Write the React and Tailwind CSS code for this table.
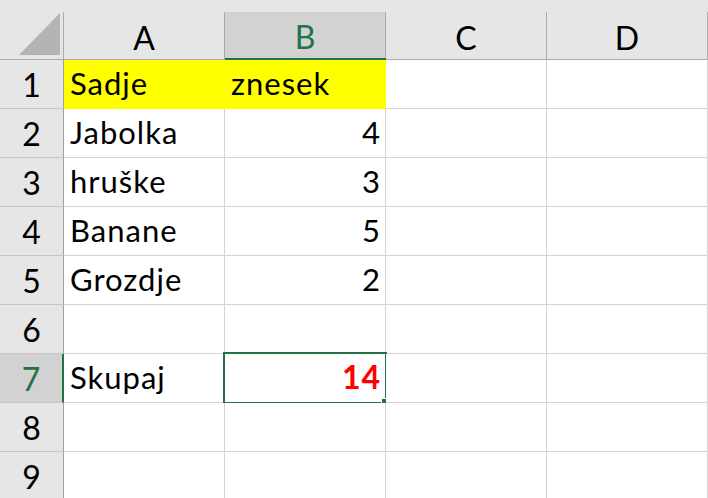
const cols = ["A", "B", "C", "D"];

const rows = [
  { n: 1, a: "Sadje", b: "znesek", fill: true },
  { n: 2, a: "Jabolka", b: "4", num: true },
  { n: 3, a: "hruške", b: "3", num: true },
  { n: 4, a: "Banane", b: "5", num: true },
  { n: 5, a: "Grozdje", b: "2", num: true },
  { n: 6 },
  { n: 7, a: "Skupaj", b: "14", num: true, total: true },
  { n: 8 },
  { n: 9 },
];

function Cell({ children, fill, right, className = "" }) {
  return (
    <div
      className={`relative w-[161px] h-full flex items-end pb-[9px] border-r border-b ${
        fill ? "bg-[#ffff00] border-[#ffff00]" : "bg-white border-[#d4d4d4]"
      } ${right ? "justify-end pl-[6px] pr-[4px]" : "px-[6px]"} ${className}`}
    >
      {children}
    </div>
  );
}

export default function App() {
  return (
    <div
      className="w-[708px] h-[498px] overflow-hidden bg-white text-black"
      style={{ fontFamily: "Lato, 'Open Sans', sans-serif" }}
    >
      {/* column headers */}
      <div className="flex h-[60px] bg-[#e6e6e6]">
        <div className="w-[64px] h-full border-b border-[#ababab] flex flex-col">
          <div className="h-[12px]" />
          <div className="flex-1 border-r border-[#ababab] relative">
            <svg className="absolute left-[19px] top-[1px]" width="42" height="43" viewBox="0 0 42 43">
              <polygon points="41,0 41,42 0,42" fill="#b4b4b4" />
            </svg>
          </div>
        </div>
        {cols.map((c) => (
          <div
            key={c}
            className={`w-[161px] h-full flex flex-col ${
              c === "B" ? "border-b-2 border-[#217346]" : "border-b border-[#ababab]"
            }`}
          >
            <div className="h-[12px]" />
            <div
              className={`flex-1 flex items-end justify-center pb-[5px] border-r border-[#ababab] text-[32px] leading-none ${
                c === "B" ? "bg-[#d2d2d2] text-[#217346]" : ""
              }`}
            >
              {c}
            </div>
          </div>
        ))}
      </div>

      {rows.map((r) => (
        <div key={r.n} className="flex h-[49px] text-[31px] tracking-[1px] leading-none">
          <div
            className={`w-[64px] h-full flex items-end justify-center pb-[7px] text-[32px] tracking-normal border-b border-[#c6c6c6] border-r ${
              r.total
                ? "bg-[#d2d2d2] text-[#217346] border-r-2 border-r-[#217346]"
                : "bg-[#e6e6e6] border-r-[#9f9f9f]"
            }`}
          >
            {r.n}
          </div>
          <Cell fill={r.fill}>{r.a}</Cell>
          <Cell fill={r.fill} right={r.num}>
            {r.total ? (
              <>
                <span className="font-bold text-[#ff0000] text-[32px]">{r.b}</span>
                <div className="absolute left-[-2px] top-[-2px] right-[-2px] bottom-[-2px] border-2 border-[#217346]" />
                <div className="absolute right-[-3px] bottom-[-3px] w-[6px] h-[6px] bg-[#217346] outline outline-1 outline-white" />
              </>
            ) : (
              r.b
            )}
          </Cell>
          <Cell />
          <Cell />
        </div>
      ))}
    </div>
  );
}
